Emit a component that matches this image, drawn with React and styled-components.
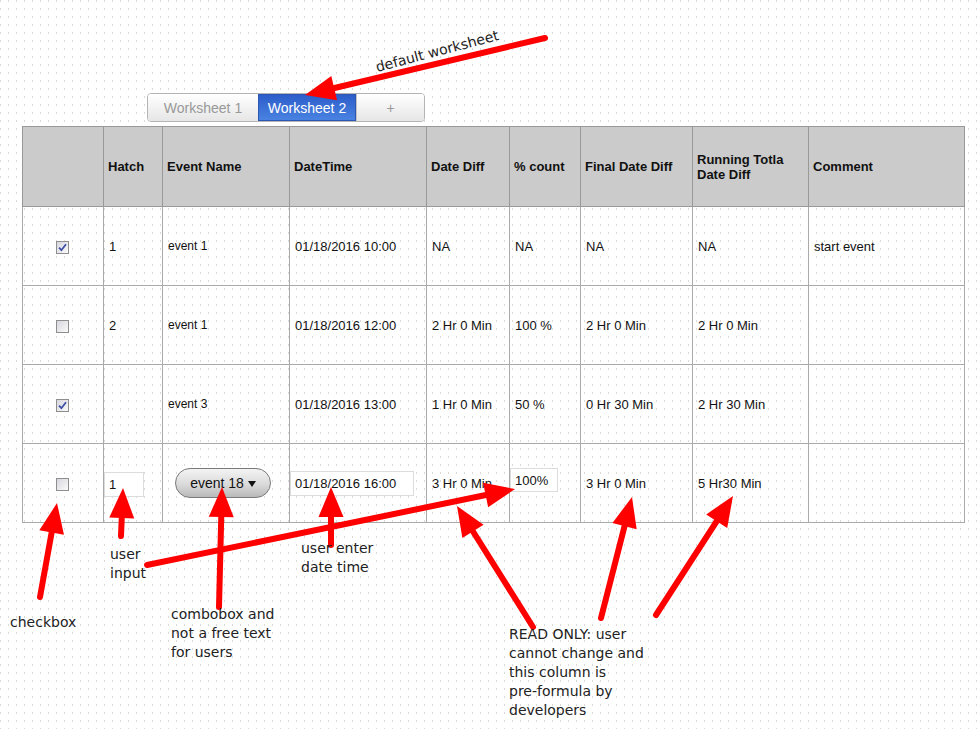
import React from "react";
import styled, { createGlobalStyle } from "styled-components";

const GlobalStyle = createGlobalStyle`
  html, body {
    margin: 0;
    padding: 0;
  }
  body {
    width: 980px;
    height: 729px;
    overflow: hidden;
    background-color: #fff;
    background-image: conic-gradient(from 0deg at 1px 2px, transparent 75%, #d9d9d9 0);
    background-size: 8px 8px;
    font-family: "Liberation Sans", Arial, sans-serif;
    color: #111;
  }
`;

const cols = [81, 59, 127, 137, 83, 71, 112, 116, 156];

const headers = [
  "",
  "Hatch",
  "Event Name",
  "DateTime",
  "Date Diff",
  "% count",
  "Final Date Diff",
  "Running Totla Date Diff",
  "Comment",
];

const rows = [
  {
    checked: true,
    hatch: "1",
    event: "event 1",
    date: "01/18/2016 10:00",
    diff: "NA",
    pct: "NA",
    final: "NA",
    running: "NA",
    comment: "start event",
  },
  {
    checked: false,
    hatch: "2",
    event: "event 1",
    date: "01/18/2016 12:00",
    diff: "2 Hr 0 Min",
    pct: "100 %",
    final: "2 Hr 0 Min",
    running: "2 Hr 0 Min",
    comment: "",
  },
  {
    checked: true,
    hatch: "",
    event: "event 3",
    date: "01/18/2016 13:00",
    diff: "1 Hr 0 Min",
    pct: "50 %",
    final: "0 Hr 30 Min",
    running: "2 Hr 30 Min",
    comment: "",
  },
];

// red annotation arrows: tail -> tip
const arrows = [
  { from: [545, 38], to: [305, 95] },
  { from: [40, 597], to: [57, 503] },
  { from: [121, 536], to: [123, 488] },
  { from: [219, 607], to: [222, 487] },
  { from: [331, 545], to: [331, 487] },
  { from: [147, 565], to: [515, 489] },
  { from: [533, 627], to: [457, 506] },
  { from: [601, 618], to: [632, 497] },
  { from: [656, 615], to: [733, 496] },
];

const Arrow = ({ from, to }) => {
  const [x1, y1] = from;
  const [x2, y2] = to;
  const len = Math.hypot(x2 - x1, y2 - y1);
  const ux = (x2 - x1) / len;
  const uy = (y2 - y1) / len;
  const headLen = 30;
  const half = 12.5;
  const bx = x2 - ux * headLen;
  const by = y2 - uy * headLen;
  const pts = [
    [x2, y2],
    [bx - uy * half, by + ux * half],
    [bx + uy * half, by - ux * half],
  ]
    .map((p) => p.join(","))
    .join(" ");
  return (
    <g>
      <line
        x1={x1}
        y1={y1}
        x2={bx + ux * 4}
        y2={by + uy * 4}
        stroke="#f00"
        strokeWidth="6"
        strokeLinecap="round"
      />
      <polygon points={pts} fill="#f00" />
    </g>
  );
};

const App = () => {
  return (
    <>
      <GlobalStyle />
      <Page>
        <Tabs>
          <Tab width={110}>Worksheet 1</Tab>
          <Tab width={98} active>
            Worksheet 2
          </Tab>
          <Tab width={67} divider>
            +
          </Tab>
        </Tabs>

        <Sheet>
          <colgroup>
            {cols.map((w, i) => (
              <col key={i} style={{ width: w }} />
            ))}
          </colgroup>
          <thead>
            <tr>
              {headers.map((h, i) => (
                <HeadCell key={i}>{h}</HeadCell>
              ))}
            </tr>
          </thead>
          <tbody>
            {rows.map((r, i) => (
              <tr key={i}>
                <Cell center>
                  <Check checked={r.checked} />
                </Cell>
                <Cell>{r.hatch}</Cell>
                <Cell small>{r.event}</Cell>
                <Cell>{r.date}</Cell>
                <Cell>{r.diff}</Cell>
                <Cell>{r.pct}</Cell>
                <Cell>{r.final}</Cell>
                <Cell>{r.running}</Cell>
                <Cell>{r.comment}</Cell>
              </tr>
            ))}
            <tr>
              <Cell center>
                <Check />
              </Cell>
              <Cell flush>
                <TextBox width={40} lift={3} defaultValue="1" />
              </Cell>
              <Cell>
                <Combo type="button">
                  event 18 <Caret />
                </Combo>
              </Cell>
              <Cell flush>
                <TextBox width={124} lift={1} defaultValue="01/18/2016 16:00" />
              </Cell>
              <Cell>3 Hr 0 Min</Cell>
              <Cell flush>
                <TextBox width={48} lift={-6} defaultValue="100%" />
              </Cell>
              <Cell>3 Hr 0 Min</Cell>
              <Cell>5 Hr30 Min</Cell>
              <Cell />
            </tr>
          </tbody>
        </Sheet>

        <Overlay width="980" height="729">
          {arrows.map((a, i) => (
            <Arrow key={i} {...a} />
          ))}
        </Overlay>

        <Tilted>default worksheet</Tilted>
        <Note x={10} y={613}>checkbox</Note>
        <Note x={110} y={545}>
          user
          <br />
          input
        </Note>
        <Note x={301} y={539}>
          user enter
          <br />
          date time
        </Note>
        <Note x={171} y={605}>
          combobox and
          <br />
          not a free text
          <br />
          for users
        </Note>
        <Note x={509} y={625}>
          READ ONLY: user
          <br />
          cannot change and
          <br />
          this column is
          <br />
          pre-formula by
          <br />
          developers
        </Note>
      </Page>
    </>
  );
};

const Check = ({ checked }) => (
  <Box>
    {checked && (
      <svg width="9" height="9" viewBox="0 0 9 9">
        <path
          d="M1 4.6 L3.4 7.2 L8 1.2"
          fill="none"
          stroke="#3d4fa6"
          strokeWidth="1.8"
        />
      </svg>
    )}
  </Box>
);

export default App;

const Page = styled.div`
  position: relative;
  width: 980px;
  height: 729px;
  box-sizing: border-box;
  padding: 93px 0 0 22px;
`;

const Tabs = styled.div`
  display: flex;
  width: max-content;
  margin-left: 125px;
  border: 1px solid #b4b4b4;
  border-radius: 4px;
  overflow: hidden;
`;

const Tab = styled.div`
  width: ${(p) => p.width}px;
  height: 27px;
  display: flex;
  align-items: center;
  justify-content: center;
  font-size: 14px;
  color: ${(p) => (p.active ? "#fff" : "#999")};
  background: ${(p) =>
    p.active
      ? "linear-gradient(#2c5cc9, #4a84e2)"
      : "linear-gradient(#ffffff, #e6e6e6)"};
  box-shadow: ${(p) => (p.active ? "inset 0 0 0 1px #2d57b3" : "none")};
  border-left: ${(p) => (p.divider ? "1px solid #c4c4c4" : "none")};
`;

const Sheet = styled.table`
  margin-top: 4px;
  width: 943px;
  border-collapse: collapse;
  table-layout: fixed;

  tbody tr {
    height: 79px;
  }
`;

const HeadCell = styled.th`
  height: 79px;
  padding: 0 4px;
  border: 1px solid #999;
  background: #cbcbcb;
  font-size: 13px;
  line-height: 15px;
  font-weight: bold;
  text-align: left;
  vertical-align: middle;
  color: #111;
`;

const Cell = styled.td`
  padding: 0 ${(p) => (p.flush ? "0" : "5px")};
  border: 1px solid #aaa;
  font-size: ${(p) => (p.small ? "12px" : "13px")};
  text-align: ${(p) => (p.center ? "center" : "left")};
  vertical-align: middle;
  color: #111;
`;

const Box = styled.span`
  display: inline-flex;
  align-items: center;
  justify-content: center;
  width: 11px;
  height: 11px;
  margin-left: -1px;
  border: 1px solid #8e8e8e;
  background: linear-gradient(135deg, #d6d6de, #fbfbfb);
  vertical-align: middle;
`;

const TextBox = styled.input`
  display: block;
  box-sizing: border-box;
  width: ${(p) => p.width}px;
  height: ${(p) => (p.lift < 0 ? 24 : 25)}px;
  margin: ${(p) => (p.lift > 0 ? p.lift : 0)}px 0
    ${(p) => (p.lift < 0 ? -p.lift : 0)}px 0;
  padding: 0 4px;
  border: 1px solid #dcdcdc;
  background: #fff;
  font-family: "Liberation Sans", Arial, sans-serif;
  font-size: 13px;
  color: #111;
  outline: none;
`;

const Combo = styled.button`
  display: inline-flex;
  align-items: center;
  justify-content: center;
  gap: 4px;
  width: 96px;
  height: 30px;
  margin-left: 7px;
  padding: 0;
  border: 1px solid #7a7a7a;
  border-radius: 15px;
  background: linear-gradient(#f4f4f4, #dadada 55%, #b9b9b9);
  font-family: "Liberation Sans", Arial, sans-serif;
  font-size: 14px;
  color: #111;
  vertical-align: middle;
`;

const Caret = styled.span`
  width: 0;
  height: 0;
  border-left: 4.5px solid transparent;
  border-right: 4.5px solid transparent;
  border-top: 6px solid #111;
  margin-top: 1px;
`;

const Overlay = styled.svg`
  position: absolute;
  left: 0;
  top: 0;
  pointer-events: none;
`;

const Note = styled.div`
  position: absolute;
  left: ${(p) => p.x}px;
  top: ${(p) => p.y}px;
  font-family: "DejaVu Sans", "Liberation Sans", sans-serif;
  font-size: 14px;
  line-height: 19px;
  color: #222;
  white-space: nowrap;
`;

const Tilted = styled(Note)`
  left: 374px;
  top: 42px;
  transform: rotate(-14.8deg);
`;
